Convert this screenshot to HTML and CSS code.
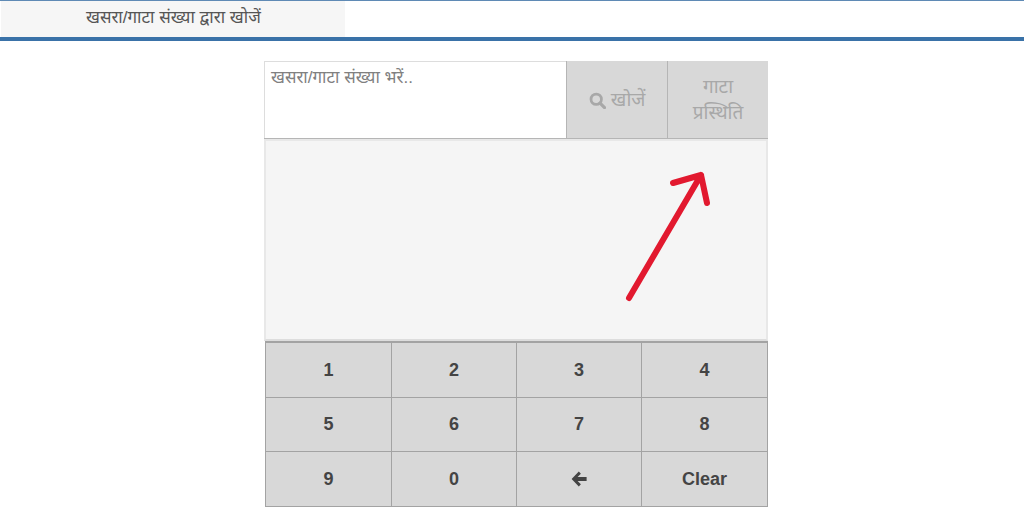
FILE: index.html
```html
<!DOCTYPE html>
<html lang="hi">
<head>
  <meta charset="UTF-8">
  <meta name="viewport" content="width=device-width, initial-scale=1.0">
  <title>खसरा/गाटा संख्या द्वारा खोजें</title>
  <link rel="stylesheet" href="styles.css">
</head>
<body>

<div class="tabs">
  <div class="tab">खसरा/गाटा संख्या द्वारा खोजें</div>
</div>

<div class="container">
  <div class="search-row">
    <div class="search-input">खसरा/गाटा संख्या भरें..</div>
    <button type="button" class="search-btn">
      <svg class="search-icon" viewBox="0 0 16 16" aria-hidden="true">
        <circle cx="6.8" cy="6.8" r="4.9" fill="none" stroke="currentColor" stroke-width="2.6"/>
        <path d="M10.4 10.4 L14.6 14.6" stroke="currentColor" stroke-width="3" stroke-linecap="round"/>
      </svg>
      खोजें
    </button>
    <button type="button" class="search-btn">गाटा<br>प्रस्थिति</button>
  </div>

  <div class="results">
    <svg class="arrow" viewBox="0 0 120 150" aria-hidden="true">
      <path d="M19 138 L91 15 M63 23 L91 15 L97 43" fill="none" stroke="#e2192f" stroke-width="6" stroke-linecap="round" stroke-linejoin="round"/>
    </svg>
  </div>

  <div class="keypad">
    <button type="button" class="key">1</button>
    <button type="button" class="key">2</button>
    <button type="button" class="key">3</button>
    <button type="button" class="key">4</button>
    <button type="button" class="key">5</button>
    <button type="button" class="key">6</button>
    <button type="button" class="key">7</button>
    <button type="button" class="key">8</button>
    <button type="button" class="key">9</button>
    <button type="button" class="key">0</button>
    <button type="button" class="key">
      <svg class="back-icon" viewBox="0 0 16 16" aria-hidden="true">
        <path d="M7.8 0.6 L0.6 8 L7.8 15.4 L9.9 13.3 L6.6 10 L15.6 10 L15.6 6 L6.6 6 L9.9 2.7 Z" fill="currentColor"/>
      </svg>
    </button>
    <button type="button" class="key">Clear</button>
  </div>
</div>

</body>
</html>
```

FILE: styles.css
```css
body {
    font-family: "Liberation Sans", Arial, "Noto Sans", sans-serif;
    background-color: #fff;
    margin: 0;
    padding: 0;
    color: #444;
}

.tabs {
    border-top: 1px solid #5f8ab5;
    border-bottom: 4px solid #3a72a8;
    height: 36px;
    padding-left: 1px;
}

.tab {
    width: 344px;
    height: 36px;
    box-sizing: border-box;
    padding-left: 85px;
    line-height: 33px;
    font-size: 17px;
    background-color: #f6f6f6;
    color: #555;
}

.container {
    width: 504px;
    margin: 20px 0 0 264px;
}

.search-row {
    display: flex;
    height: 78px;
    border-bottom: 1px solid #b5b5b5;
    box-sizing: border-box;
}

.search-input {
    width: 302px;
    box-sizing: border-box;
    border: 1px solid #ddd;
    border-bottom: none;
    border-right: none;
    padding: 4px 6px;
    font-size: 17px;
    line-height: 24px;
    color: #808080;
}

.search-btn {
    width: 101px;
    border: none;
    border-left: 1px solid #b5b5b5;
    padding: 0;
    background-color: #d8d8d8;
    color: #a8a8a8;
    font-family: inherit;
    font-size: 19px;
    line-height: 26px;
}

.search-icon {
    width: 17px;
    height: 17px;
    vertical-align: -3px;
}

.results {
    position: relative;
    height: 202px;
    box-sizing: border-box;
    background-color: #f5f5f5;
    border: 2px solid #e8e8e8;
    border-bottom-color: #ddd;
}

.arrow {
    position: absolute;
    left: 344px;
    top: 19px;
    width: 120px;
    height: 150px;
}

.keypad {
    display: grid;
    grid-template-columns: 125px 124px 124px 125px;
    grid-template-rows: 54px 53px 54px;
    gap: 1px;
    width: 503px;
    box-sizing: border-box;
    margin-left: 1px;
    background-color: #a3a3a3;
    border: 1px solid #a3a3a3;
    border-top-width: 2px;
}

.key {
    border: none;
    padding: 0;
    background-color: #d8d8d8;
    color: #444;
    font-family: inherit;
    font-size: 18px;
    font-weight: bold;
}

.back-icon {
    display: block;
    width: 16px;
    height: 16px;
    margin: 0 auto;
}
```
